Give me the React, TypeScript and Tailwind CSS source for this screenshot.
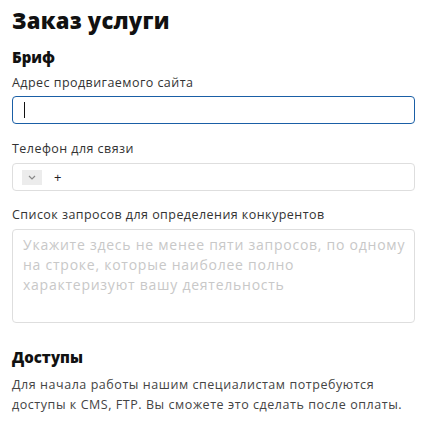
import type { FC } from 'react';

const font = { fontFamily: '"Open Sans", "Noto Sans", sans-serif' };

const Label: FC<{ text: string }> = ({ text }) => (
  <div className="text-[12.5px] leading-[16px] text-[#333] tracking-[0.45px]">{text}</div>
);

const App: FC = () => {
  return (
    <div className="bg-white w-[428px] h-[423px] px-3 pt-[6px]" style={font}>
      {/* Title */}
      <h1 className="text-[22px] leading-[28px] font-extrabold text-[#111] tracking-[0.2px]">Заказ услуги</h1>

      {/* Brief */}
      <h3 className="mt-[14px] text-[15px] leading-[18px] font-extrabold text-[#111]">Бриф</h3>

      <div className="mt-[9px]">
        <Label text="Адрес продвигаемого сайта" />
        <div className="mt-[5px] h-[28px] w-[403px] rounded-[4px] border-[1.5px] border-[#1a5fa6] flex items-center pl-[11px]">
          <div className="w-px h-[16px] bg-[#111]" />
        </div>
      </div>

      <div className="mt-[17px]">
        <Label text="Телефон для связи" />
        <div className="mt-[6px] h-[28px] w-[403px] rounded-[4px] border border-[#dedede] flex items-center pl-[9px]">
          <div className="w-[20px] h-[15px] bg-[#ececec] flex items-center justify-center">
            <svg width="8" height="5" viewBox="0 0 8 5" fill="none">
              <path d="M1 1l3 3 3-3" stroke="#888" strokeWidth="1.2" />
            </svg>
          </div>
          <span className="ml-[12px] text-[13px] text-[#222] leading-none">+</span>
        </div>
      </div>

      <div className="mt-[16px]">
        <Label text="Список запросов для определения конкурентов" />
        <div className="mt-[6px] h-[94px] w-[403px] rounded-[4px] border border-[#dedede] pl-[10px] pr-[6px] pt-[5px] text-[14px] leading-[20px] tracking-[0.75px] text-[#c8c8c8]">
          Укажите здесь не менее пяти запросов, по одному на строке, которые наиболее полно характеризуют вашу деятельность
        </div>
      </div>

      {/* Access */}
      <h3 className="mt-[25px] text-[15px] leading-[18px] font-extrabold text-[#111]">Доступы</h3>
      <p className="mt-[9px] text-[12.5px] leading-[20px] tracking-[0.55px] text-[#444]">
        Для начала работы нашим специалистам потребуются доступы к CMS, FTP. Вы сможете это сделать после оплаты.
      </p>
    </div>
  );
};

export default App;
